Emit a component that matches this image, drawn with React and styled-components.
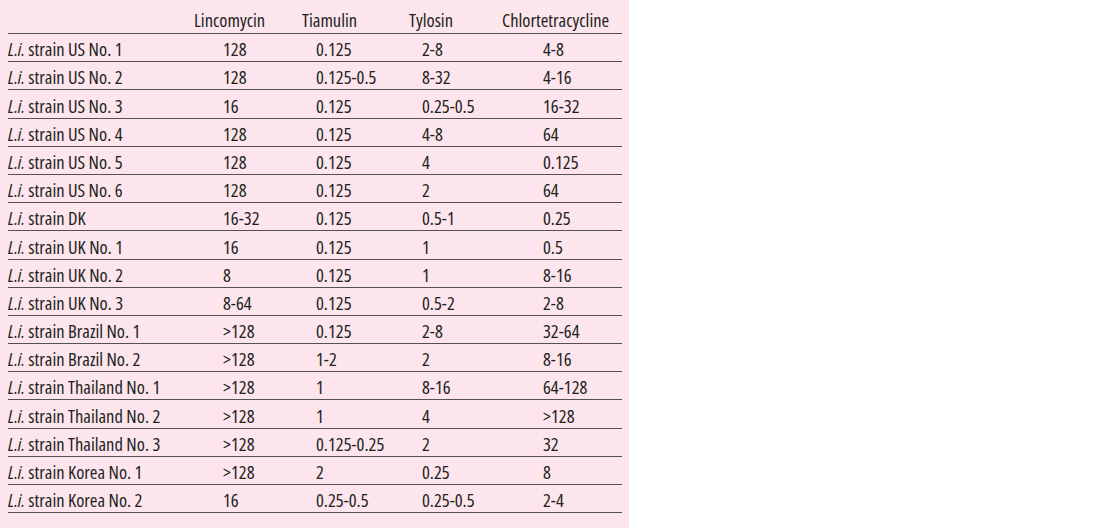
import React from 'react'
import styled, { createGlobalStyle } from "styled-components";

const Global = createGlobalStyle`
body{
margin:0;
background:#ffffff;
}
`
const Panel = styled.div`
width:629px;
height:528px;
box-sizing:border-box;
background:#fce5ed;
padding:0 7px 0 8px;
font-family:"Open Sans","Liberation Sans",sans-serif;
font-stretch:75%;
font-size:18.5px;
color:#231f20;
`
const Row = styled.div`
display:grid;
grid-template-columns:171px 100px 100px 101px 142px;
align-items:end;
box-sizing:border-box;
height:${({head})=>head ? "34px" : "28.2px"};
border-bottom:1.5px solid #555052;
padding-bottom:${({head})=>head ? "3px" : "2px"};
line-height:20px;
`
const Cell = styled.div`
padding-left:${({pad})=>pad || 0}px;
white-space:nowrap;
`
const Abbr = styled.i`
font-style:italic;
`

const headPads = [15, 23, 30, 22]
const dataPads = [44, 37, 43, 63]
const heads = ["Lincomycin", "Tiamulin", "Tylosin", "Chlortetracycline"]

const rows = [
  ["strain US No. 1", "128", "0.125", "2-8", "4-8"],
  ["strain US No. 2", "128", "0.125-0.5", "8-32", "4-16"],
  ["strain US No. 3", "16", "0.125", "0.25-0.5", "16-32"],
  ["strain US No. 4", "128", "0.125", "4-8", "64"],
  ["strain US No. 5", "128", "0.125", "4", "0.125"],
  ["strain US No. 6", "128", "0.125", "2", "64"],
  ["strain DK", "16-32", "0.125", "0.5-1", "0.25"],
  ["strain UK No. 1", "16", "0.125", "1", "0.5"],
  ["strain UK No. 2", "8", "0.125", "1", "8-16"],
  ["strain UK No. 3", "8-64", "0.125", "0.5-2", "2-8"],
  ["strain Brazil No. 1", ">128", "0.125", "2-8", "32-64"],
  ["strain Brazil No. 2", ">128", "1-2", "2", "8-16"],
  ["strain Thailand No. 1", ">128", "1", "8-16", "64-128"],
  ["strain Thailand No. 2", ">128", "1", "4", ">128"],
  ["strain Thailand No. 3", ">128", "0.125-0.25", "2", "32"],
  ["strain Korea No. 1", ">128", "2", "0.25", "8"],
  ["strain Korea No. 2", "16", "0.25-0.5", "0.25-0.5", "2-4"],
]

const App = () => {
  return (
	<>
	<Global/>
	<Panel>
		<Row head>
			<Cell/>
			{heads.map((h, i) => <Cell key={h} pad={headPads[i]}>{h}</Cell>)}
		</Row>
		{rows.map((r) => (
			<Row key={r[0]}>
				<Cell><Abbr>L.i.</Abbr> {r[0]}</Cell>
				{r.slice(1).map((v, i) => <Cell key={i} pad={dataPads[i]}>{v}</Cell>)}
			</Row>
		))}
	</Panel>
	</>
  )
}

export default App
